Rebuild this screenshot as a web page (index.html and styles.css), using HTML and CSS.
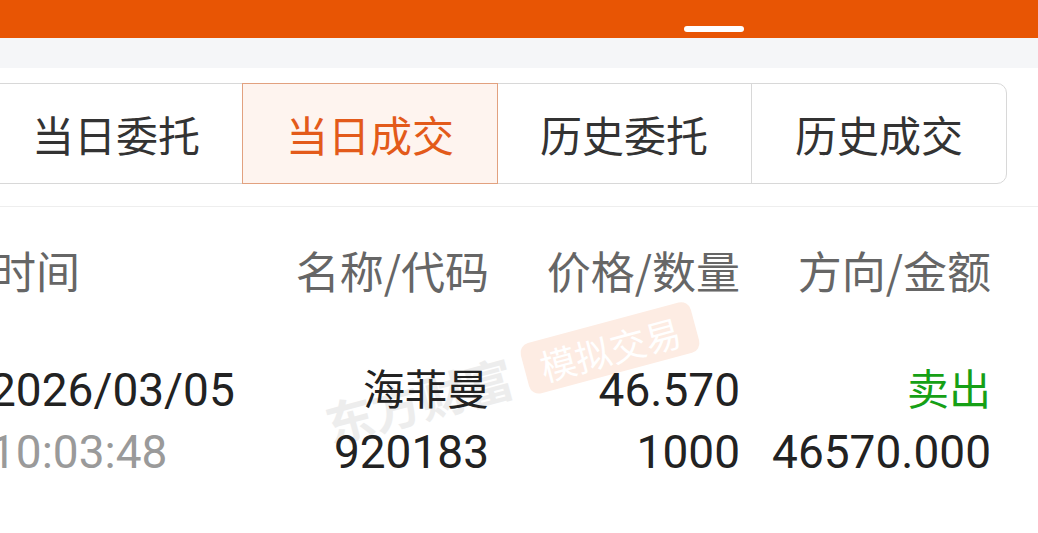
FILE: index.html
```html
<!DOCTYPE html>
<html lang="zh">
<head>
<meta charset="utf-8">
<link rel="stylesheet" href="styles.css">
</head>
<body>
<div class="topbar"><span class="pill"></span></div>
<div class="band"></div>
<div class="tabs-wrap">
  <div class="tabs">
    <div class="tab">当日委托</div>
    <div class="tab active">当日成交</div>
    <div class="tab">历史委托</div>
    <div class="tab">历史成交</div>
  </div>
</div>
<div class="sep"></div>
<div class="table">
  <div class="watermark">
    <span class="wm-brand">东方财富</span>
    <span class="wm-badge">模拟交易</span>
  </div>
  <div class="row head">
    <div class="c1">时间</div>
    <div class="c">名称/代码</div>
    <div class="c">价格/数量</div>
    <div class="c">方向/金额</div>
  </div>
  <div class="row data">
    <div class="c1">2026/03/05</div>
    <div class="c"><span class="cn">海菲曼</span></div>
    <div class="c">46.570</div>
    <div class="c"><span class="cn sell">卖出</span></div>
  </div>
  <div class="row data">
    <div class="c1 muted">10:03:48</div>
    <div class="c">920183</div>
    <div class="c">1000</div>
    <div class="c">46570.000</div>
  </div>
</div>
</body>
</html>
```
FILE: styles.css
```css
html, body {
  margin: 0;
  padding: 0;
  background: #ffffff;
}
body {
  width: 1038px;
  height: 533px;
  overflow: hidden;
  font-family: "Noto Sans CJK SC", "Noto Sans", sans-serif;
}
.topbar {
  height: 38px;
  background: #e85504;
  display: flex;
  align-items: flex-end;
  padding-left: 684px;
  box-sizing: border-box;
  padding-bottom: 6px;
}
.pill {
  width: 60px;
  height: 6px;
  border-radius: 3px;
  background: #ffffff;
}
.band {
  height: 30px;
  background: #f5f6f8;
}
.tabs-wrap {
  padding-top: 15px;
  padding-bottom: 22px;
}
.tabs {
  margin-left: -12px;
  width: 1019px;
  height: 101px;
  box-sizing: border-box;
  border: 1px solid #d8d8d8;
  border-radius: 10px;
  display: flex;
}
.tab {
  flex: 1;
  display: flex;
  align-items: center;
  justify-content: center;
  font-size: 42px;
  color: #333333;
}
.tab + .tab {
  border-left: 1px solid #d8d8d8;
}
.tab.active,
.tab.active + .tab {
  border-left: none;
}
.tab.active {
  position: relative;
  z-index: 1;
  background: #fef4ef;
  color: #e35a1a;
  box-shadow: 0 0 0 1px #e2a17f;
}
.sep {
  height: 1px;
  background: #eeeeee;
}
.table {
  position: relative;
  padding-top: 33px;
}
.row {
  position: relative;
  z-index: 1;
  display: grid;
  grid-template-columns: 1fr 251px 251px 251px;
  margin-left: -10px;
  padding-right: 47px;
}
.row .c {
  text-align: right;
}
.head {
  font-size: 44px;
  line-height: 60px;
  color: #666666;
  margin-left: -8px;
  margin-bottom: 60px;
}
.data {
  font-family: Roboto, "Noto Sans CJK SC", sans-serif;
  font-size: 46px;
  line-height: 60px;
  color: #222222;
}
.cn {
  font-family: "Noto Sans CJK SC", sans-serif;
  font-size: 42px;
  position: relative;
  top: -3px;
}
.sell {
  color: #16a016;
}
.muted {
  color: #9a9a9a;
}
.watermark {
  position: absolute;
  left: 326px;
  top: 182px;
  z-index: 0;
  display: flex;
  align-items: center;
  gap: 14px;
  transform: rotate(-15deg);
  transform-origin: left center;
}
.wm-brand {
  font-size: 48px;
  font-weight: 700;
  color: #ededed;
}
.wm-badge {
  font-size: 36px;
  color: #ffffff;
  background: #fdece3;
  border-radius: 10px;
  padding: 0 16px;
  line-height: 52px;
}
```
